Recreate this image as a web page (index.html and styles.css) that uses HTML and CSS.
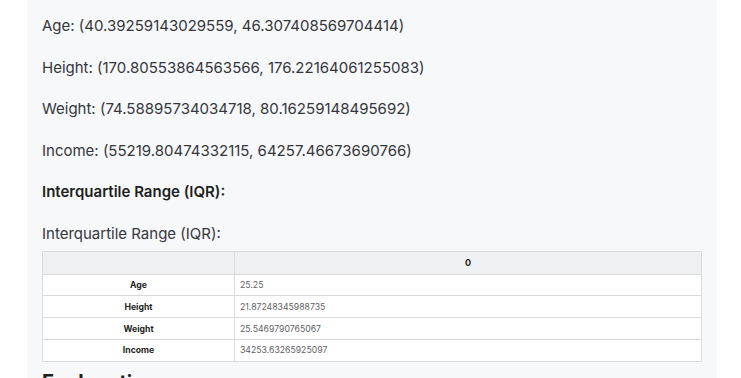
FILE: index.html
```html
<!DOCTYPE html>
<html>
<head>
<meta charset="utf-8">
<link rel="stylesheet" href="styles.css">
</head>
<body>
<div class="page">
  <div class="panel">
    <p class="line">Age: (40.39259143029559, 46.307408569704414)</p>
    <p class="line">Height: (170.80553864563566, 176.22164061255083)</p>
    <p class="line">Weight: (74.58895734034718, 80.16259148495692)</p>
    <p class="line">Income: (55219.80474332115, 64257.46673690766)</p>
    <p class="line strong">Interquartile Range (IQR):</p>
    <p class="line caption">Interquartile Range (IQR):</p>
    <table class="grid">
      <thead>
        <tr><th class="idx"></th><th>0</th></tr>
      </thead>
      <tbody>
        <tr><th class="idx">Age</th><td>25.25</td></tr>
        <tr><th class="idx">Height</th><td>21.87248345988735</td></tr>
        <tr><th class="idx">Weight</th><td>25.5469790765067</td></tr>
        <tr><th class="idx">Income</th><td>34253.63265925097</td></tr>
      </tbody>
    </table>
    <h3 class="section">Explanation</h3>
  </div>
</div>
</body>
</html>
```

FILE: styles.css
```css
html, body {
  margin: 0;
  padding: 0;
  background: #ffffff;
}
body {
  font-family: Inter, "Noto Sans", sans-serif;
  color: #34363a;
  overflow: hidden;
  height: 378px;
}
.page {
  padding-left: 27px;
  width: 690px;
}
.panel {
  background: #f7f8fa;
  padding: 15px 15px 20px 15px;
}
.line {
  margin: 0 0 19px 0;
  font-size: 15px;
  line-height: 22.6px;
}
.strong {
  font-weight: 600;
  color: #1d1f22;
}
.caption {
  margin-bottom: 5px;
}
.grid {
  width: 660px;
  border-collapse: collapse;
  font-size: 8.7px;
  background: #ffffff;
  border: 1px solid #d9dadc;
}
.grid th, .grid td {
  border: 1px solid #d9dadc;
  height: 20.8px;
  padding: 0 5px;
}
.grid thead th {
  background: #eff0f1;
  height: 22px;
  font-weight: 700;
  color: #1d1f22;
  font-size: 9px;
}
.grid th.idx {
  width: 181px;
  font-weight: 700;
  color: #1d1f22;
  text-align: center;
}
.grid td {
  color: #5f6166;
  text-align: left;
}
.section {
  margin: 8px 0 0 0;
  font-size: 20px;
  font-weight: 700;
  color: #1d1f22;
}
```
